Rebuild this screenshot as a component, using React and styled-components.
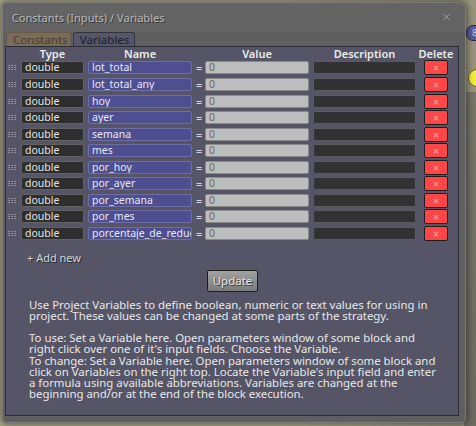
import styled, { createGlobalStyle } from 'styled-components';

const GlobalStyle = createGlobalStyle`
  html, body {
    margin: 0;
    padding: 0;
  }
  body {
    width: 476px;
    height: 426px;
    overflow: hidden;
    font-family: "Noto Sans", "DejaVu Sans", sans-serif;
  }
`;

const Desktop = styled.div`
  position: relative;
  width: 476px;
  height: 426px;
  overflow: hidden;
  box-sizing: border-box;
  padding: 3px 0 0 3px;
  background:
    linear-gradient(180deg, transparent 0, transparent 92px, #77766a 92px, #6c6b62 100%) right / 12px 100% no-repeat,
    linear-gradient(90deg, #b3ad8c 0%, #b3ad8c 60%, #98947c 100%);
`;

const NodePill = styled.div`
  position: absolute;
  left: 466px;
  top: 25px;
  width: 26px;
  height: 14px;
  border-radius: 7px;
  background: #5a5a9a;
  border: 1px solid #2a2a40;
  color: #c8c8d0;
  font-size: 9px;
  line-height: 14px;
  padding-left: 5px;
`;

const NodeDot = styled.div`
  position: absolute;
  left: 468px;
  top: 69px;
  width: 16px;
  height: 16px;
  border-radius: 50%;
  background: #f2ee3a;
  border: 1px solid #6a6a20;
`;

const Window = styled.div`
  position: relative;
  z-index: 1;
  width: 462px;
  height: 419px;
  box-sizing: border-box;
  display: flex;
  flex-direction: column;
  padding: 0 6px 6px 2px;
  background: #5f5f5f;
  border-radius: 4px 7px 4px 4px;
  box-shadow: 0 0 0 1px #7c7c7c, 0 0 6px 3px rgba(0, 0, 0, 0.45);
`;

const TitleBar = styled.div`
  height: 28.7px;
  display: flex;
  align-items: center;
  justify-content: space-between;
  margin: 0 -6px 0 -2px;
  padding: 0 12px 0 8.7px;
  background: #646464;
  border-radius: 4px 7px 0 0;
`;

const Title = styled.span`
  color: #b8b8b8;
  font-size: 11.1px;
  text-shadow: 1px 1px 0 #3a3a3a;
`;

const Tabs = styled.div`
  display: flex;
  gap: 1.7px;
  height: 14px;
  margin-left: 1px;
`;

const Tab = styled.div`
  box-sizing: border-box;
  width: ${(p) => p.width}px;
  height: 14px;
  padding-left: 6px;
  border-radius: 3px 3px 0 0;
  border: 1px solid ${(p) => (p.active ? '#34343f' : '#6a5a4a')};
  border-bottom: none;
  background: ${(p) => (p.active ? '#56566c' : '#7b6b59')};
  color: ${(p) => (p.active ? '#1c1c28' : '#463c32')};
  font-size: 11.6px;
  line-height: 13px;
`;

const Panel = styled.div`
  flex: 1;
  display: flex;
  flex-direction: column;
  background: #555567;
  border: 1px solid #2c2c36;
  padding-left: 1px;
`;

const Grid = styled.div`
  display: grid;
  grid-template-columns: 14px 67px 104px 13px 108px 111px 24px;
  grid-template-rows: 13px;
  grid-auto-rows: 16.56px;
  align-items: center;
`;

const HeadCell = styled.div`
  grid-column: ${(p) => p.col};
  width: ${(p) => p.width}px;
  display: flex;
  justify-content: center;
  white-space: nowrap;
  color: #ececec;
  font-size: 11px;
  font-weight: 600;
  line-height: 13px;
`;

const Handle = styled.svg`
  width: 9px;
  height: 5px;
  margin-left: 1px;
`;

const Field = styled.div`
  box-sizing: border-box;
  width: ${(p) => p.width}px;
  height: 13px;
  padding-left: 3px;
  border-radius: 2px;
  border: 1px solid ${(p) => p.edge};
  background: ${(p) => p.fill};
  color: ${(p) => p.ink};
  font-size: 10.5px;
  line-height: 11px;
  white-space: nowrap;
  overflow: hidden;
`;

const Equals = styled.div`
  color: #d8d8d8;
  font-size: 11px;
  line-height: 13px;
  padding-left: 4px;
`;

const DeleteButton = styled.div`
  box-sizing: border-box;
  width: 24px;
  height: 15px;
  border-radius: 2px;
  border: 1px solid #1e1e1e;
  background: #ff4646;
  color: #ffb4b4;
  font-size: 8px;
  line-height: 13px;
  text-align: center;
`;

const AddNew = styled.div`
  margin: 9px 0 0 20px;
  color: #d4d4d4;
  font-size: 11px;
  line-height: 14px;
  text-shadow: 1px 1px 0 #2a2a2a;
`;

const UpdateButton = styled.div`
  align-self: center;
  box-sizing: border-box;
  width: 51px;
  height: 22px;
  margin-top: 5px;
  border-radius: 2px;
  border: 1px solid #1e1e1e;
  background: linear-gradient(#a2a2a2, #7a7a7a);
  color: #e2e2e2;
  font-size: 11.5px;
  line-height: 20px;
  text-align: center;
  text-shadow: 1px 1px 0 #3a3a3a;
`;

const Help = styled.div`
  margin: 7px 0 0 22px;
  width: 412px;
  color: #e8e8e8;
  font-size: 11.4px;
  line-height: 11.2px;
  p {
    margin: 0 0 11px;
  }
`;

const CloseIcon = () => (
  <svg width="13" height="12" viewBox="0 0 13 12">
    <path
      d="M2 1 L6.5 4.5 L11 1 L12 2.2 L8 6 L12 9.8 L11 11 L6.5 7.5 L2 11 L1 9.8 L5 6 L1 2.2 Z"
      fill="#8c8c8c"
      stroke="#4e4e4e"
      strokeWidth="0.8"
      strokeLinejoin="round"
    />
  </svg>
);

const DragDots = () => (
  <Handle viewBox="0 0 9 5">
    {[0, 3, 6].map((x) =>
      [0, 2, 4].map((y) => (
        <rect key={`${x}-${y}`} x={x + 0.5} y={y} width="1.4" height="1" fill="#a8a8b4" />
      ))
    )}
  </Handle>
);

const variables = [
  'lot_total',
  'lot_total_any',
  'hoy',
  'ayer',
  'semana',
  'mes',
  'por_hoy',
  'por_ayer',
  'por_semana',
  'por_mes',
  'porcentaje_de_reduccion',
];

const Row = ({ name }) => (
  <>
    <DragDots />
    <Field width={63} fill="#2e2e2e" edge="#626262" ink="#e4e4e4">
      double
    </Field>
    <Field width={104} fill="#4e4e90" edge="#6e6ea4" ink="#e8e8f2">
      {name}
    </Field>
    <Equals>=</Equals>
    <Field width={104} fill="#bdbdbd" edge="#8a8a8a" ink="#6a6a6a">
      0
    </Field>
    <Field width={103} fill="#323232" edge="#5c5c5c" ink="#e4e4e4" />
    <DeleteButton>✕</DeleteButton>
  </>
);

const App = () => (
  <>
    <GlobalStyle />
    <Desktop>
      <NodePill>88</NodePill>
      <NodeDot />
      <Window>
        <TitleBar>
          <Title>Constants (Inputs) / Variables</Title>
          <CloseIcon />
        </TitleBar>
        <Tabs>
          <Tab width={65}>Constants</Tab>
          <Tab width={62} active>
            Variables
          </Tab>
        </Tabs>
        <Panel>
          <Grid>
            <HeadCell col={2} width={63}>Type</HeadCell>
            <HeadCell col={3} width={104}>Name</HeadCell>
            <HeadCell col={5} width={104}>Value</HeadCell>
            <HeadCell col={6} width={103}>Description</HeadCell>
            <HeadCell col={7} width={24}>Delete</HeadCell>
            {variables.map((name) => (
              <Row key={name} name={name} />
            ))}
          </Grid>
          <AddNew>+ Add new</AddNew>
          <UpdateButton>Update</UpdateButton>
          <Help>
            <p>
              Use Project Variables to define boolean, numeric or text values for using in
              project. These values can be changed at some parts of the strategy.
            </p>
            To use: Set a Variable here. Open parameters window of some block and right click
            over one of it's input fields. Choose the Variable.
            <br />
            To change: Set a Variable here. Open parameters window of some block and click on
            Variables on the right top. Locate the Variable's input field and enter a formula
            using available abbreviations. Variables are changed at the beginning and/or at the
            end of the block execution.
          </Help>
        </Panel>
      </Window>
    </Desktop>
  </>
);

export default App;
